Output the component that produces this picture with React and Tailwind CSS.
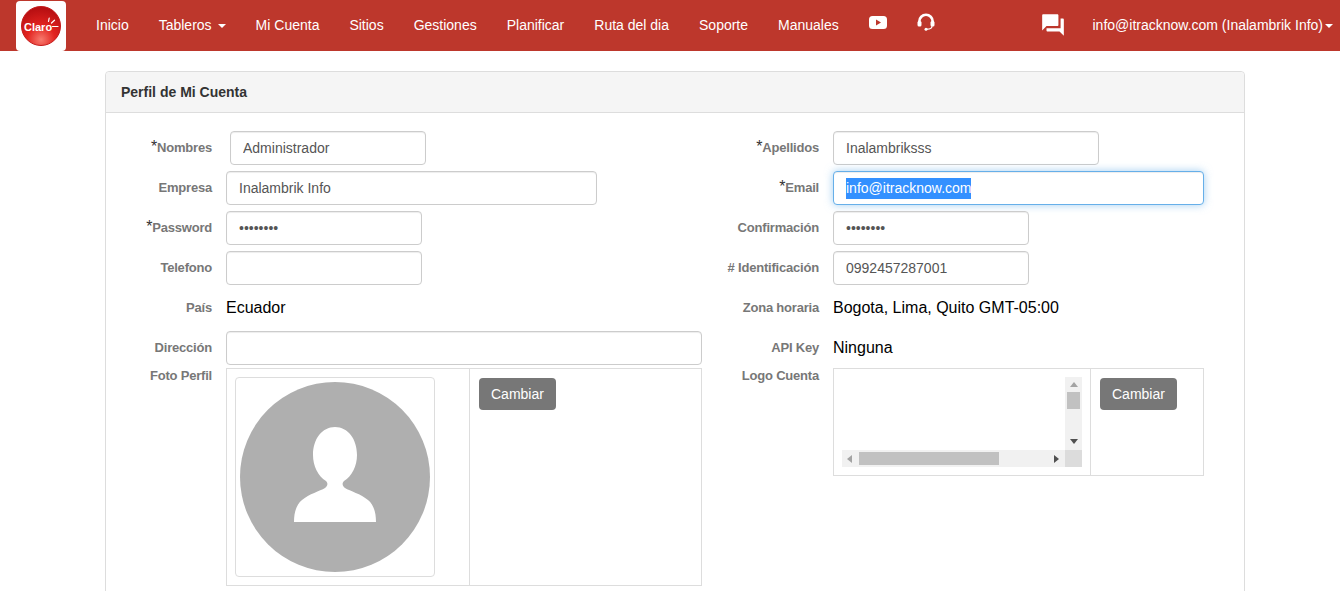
import React from "react";
import { MdQuestionAnswer } from "react-icons/md";

function Label({ children, required, top }) {
	return (
		<label
			className={`w-[106px] mr-[14px] shrink-0 text-right text-[13px] tracking-[-0.2px] font-bold text-[#777] ${top ? "self-start leading-[16px]" : ""}`}>
			{required && <span className="font-normal text-[#333] text-[16px] leading-[0]">*</span>}
			{children}
		</label>
	);
}

function Input({ value, type = "text", width, className = "" }) {
	return (
		<input
			readOnly
			type={type}
			value={value}
			className={`h-[34px] px-3 text-[14px] text-[#555] bg-white border border-[#ccc] rounded outline-none shadow-[inset_0_1px_1px_rgba(0,0,0,0.075)] ${width} ${className}`}
		/>
	);
}

function Row({ label, required, children }) {
	return (
		<div className="flex items-center h-[34px] mb-[6px]">
			<Label required={required}>{label}</Label>
			{children}
		</div>
	);
}

function Arrow({ dir, className }) {
	const points = {
		up: "0,6 4,1 8,6",
		down: "0,1 8,1 4,6",
		left: "6,0 6,8 1,4",
		right: "1,0 1,8 6,4",
	};
	return (
		<svg viewBox="0 0 8 8" className={`w-2 h-2 ${className}`} fill="currentColor">
			<polygon points={points[dir]} />
		</svg>
	);
}

function Logo() {
	return (
		<div className="w-[50px] h-[50px] bg-white rounded flex items-center justify-center">
			<svg viewBox="0 0 40 40" className="w-[40px] h-[40px]">
				<defs>
					<radialGradient id="claroBall" cx="50%" cy="85%" r="80%">
						<stop offset="0%" stopColor="#f77a6e" />
						<stop offset="45%" stopColor="#e2231f" />
						<stop offset="100%" stopColor="#b70f12" />
					</radialGradient>
				</defs>
				<circle cx="20" cy="20" r="19.5" fill="url(#claroBall)" stroke="#c41a1a" strokeWidth="1" />
				<text x="3" y="25" fontSize="11" fontWeight="700" fill="#fff" fontFamily="Liberation Sans, sans-serif">
					Claro
				</text>
				<path d="M27.5 15.5l.7-3.5M30.5 17l3-2.8M31.5 20.5h5.5" stroke="#fff" strokeWidth="1.2" strokeLinecap="round" fill="none" />
			</svg>
		</div>
	);
}

function Avatar() {
	return (
		<svg viewBox="0 0 190 190" className="w-[190px] h-[190px]">
			<circle cx="95" cy="95" r="95" fill="#afafaf" />
			<path
				d="M95 45c-13 0-22 12-22 28 0 11 5 21 13 26 2 2 2 5-1 7-5 3-16 6-23 12-6 5-8 13-8 22h82c0-9-2-17-8-22-7-6-18-9-23-12-3-2-3-5-1-7 8-5 13-15 13-26 0-16-9-28-22-28z"
				fill="#fff"
			/>
		</svg>
	);
}

const navItems = ["Inicio", "Tableros", "Mi Cuenta", "Sitios", "Gestiones", "Planificar", "Ruta del dia", "Soporte", "Manuales"];

export default function App() {
	return (
		<div className="h-[591px] overflow-hidden bg-white font-['Liberation_Sans',sans-serif] text-[14px]">
			{/* Navbar */}
			<nav className="h-[51px] bg-[#bd372c] text-white flex items-center pl-4 text-[14px]">
				<Logo />
				<ul className="flex items-center ml-[15px]">
					{navItems.map((item) => (
						<li key={item} className="px-[15px] flex items-center">
							{item}
							{item === "Tableros" && (
								<span className="ml-[6px] mt-[1px] border-x-4 border-x-transparent border-t-4 border-t-white" />
							)}
						</li>
					))}
					<li className="px-[15px] mb-[7px]">
						<svg viewBox="0 0 18 13" className="w-[18px] h-[13px]">
							<path
								fillRule="evenodd"
								fill="#fff"
								d="M3.5 0h11A3.5 3.5 0 0118 3.5v6a3.5 3.5 0 01-3.5 3.5h-11A3.5 3.5 0 010 9.500v-6A3.500 3.500 0 013.500 0zM7 3.500v6l5-3z"
							/>
						</svg>
					</li>
					<li className="px-[15px] mb-[7px]">
						<svg viewBox="0 0 18 18" className="w-[18px] h-[18px]" fill="none">
							<path d="M2.3 11V8.500a6.700 6.700 0 0113.400 0V11" stroke="#fff" strokeWidth="2.600" />
							<rect x="0.500" y="8" width="4" height="5.500" rx="1.500" fill="#fff" />
							<rect x="13.500" y="8" width="4" height="5.500" rx="1.500" fill="#fff" />
							<path d="M15 13c0 2.200-2 3.200-5 3.200" stroke="#fff" strokeWidth="1.200" />
							<circle cx="9" cy="16.200" r="1.500" fill="#fff" />
						</svg>
					</li>
				</ul>
				<MdQuestionAnswer className="ml-auto mb-[2px] w-[26px] h-[26px] text-white" />
				<div className="flex items-center ml-[26px] mr-[7px]">
					info@itracknow.com (Inalambrik Info)
					<span className="ml-[2px] mt-[1px] border-x-4 border-x-transparent border-t-4 border-t-white" />
				</div>
			</nav>

			<div className="ml-[105px] mr-[95px] mt-5 border border-[#ddd] rounded h-[600px]">
				<div className="h-[41px] bg-[#f5f5f5] border-b border-[#ddd] flex items-center pl-[15px] pt-[1px] text-[14px] font-bold text-[#333] rounded-t">
					Perfil de Mi Cuenta
				</div>

				<div className="flex pt-[18px]">
					{/* Left column */}
					<div className="w-[596px] mr-[11px]">
						<Row label="Nombres" required>
							<Input value="Administrador" width="w-[196px] ml-1" />
						</Row>
						<Row label="Empresa">
							<Input value="Inalambrik Info" width="w-[371px]" />
						</Row>
						<Row label="Password" required>
							<Input value="12345678" type="password" width="w-[196px]" />
						</Row>
						<Row label="Telefono">
							<Input value="" width="w-[196px]" />
						</Row>
						<Row label="País">
							<span className="text-[16px] text-black">Ecuador</span>
						</Row>
						<div className="flex items-center h-[34px] mb-[3px]">
							<Label>Dirección</Label>
							<Input value="" width="w-[476px]" />
						</div>
						<div className="flex">
							<Label top>Foto Perfil</Label>
							<div className="w-[476px] h-[218px] border border-[#ddd] flex">
								<div className="w-[243px] border-r border-[#ddd] p-2">
									<div className="w-[200px] h-[200px] border border-[#ddd] rounded p-1">
										<Avatar />
									</div>
								</div>
								<div className="p-[9px]">
									<button className="h-[32px] px-3 bg-[#777] text-white rounded text-[14px]">Cambiar</button>
								</div>
							</div>
						</div>
					</div>

					{/* Right column */}
					<div className="w-[491px]">
						<Row label="Apellidos" required>
							<Input value="Inalambriksss" width="w-[266px]" />
						</Row>
						<div className="flex items-center h-[34px] mb-[6px]">
							<Label required>Email</Label>
							<div className="w-[371px] h-[34px] px-3 flex items-center text-[14px] text-white bg-white border border-[#66afe9] rounded shadow-[inset_0_1px_1px_rgba(0,0,0,0.075),0_0_8px_rgba(102,175,233,0.6)]">
								<span className="bg-[#3390ff]">info@itracknow.com</span>
							</div>
						</div>
						<Row label="Confirmación">
							<Input value="12345678" type="password" width="w-[196px]" />
						</Row>
						<Row label="# Identificación">
							<Input value="0992457287001" width="w-[196px]" />
						</Row>
						<Row label="Zona horaria">
							<span className="text-[16px] text-black">Bogota, Lima, Quito GMT-05:00</span>
						</Row>
						<div className="flex items-center h-[34px] mb-[3px]">
							<Label>API Key</Label>
							<span className="text-[16px] text-black">Ninguna</span>
						</div>
						<div className="flex">
							<Label top>Logo Cuenta</Label>
							<div className="w-[371px] h-[108px] border border-[#ddd] flex">
								<div className="w-[257px] border-r border-[#ddd] p-2">
									<div className="w-[240px] h-[90px] flex flex-col">
										<div className="flex flex-1">
											<div className="flex-1" />
											<div className="w-[17px] bg-[#f1f1f1] flex flex-col items-center">
												<Arrow dir="up" className="mt-1 text-[#a3a3a3]" />
												<div className="w-[13px] h-[17px] mt-[3px] bg-[#c1c1c1]" />
												<Arrow dir="down" className="mt-auto mb-1 text-[#505050]" />
											</div>
										</div>
										<div className="h-[17px] flex">
											<div className="flex-1 bg-[#f1f1f1] flex items-center">
												<Arrow dir="left" className="ml-1 text-[#a3a3a3]" />
												<div className="w-[140px] h-[13px] ml-[5px] bg-[#c1c1c1]" />
												<Arrow dir="right" className="ml-auto mr-1 text-[#505050]" />
											</div>
											<div className="w-[17px] bg-[#dcdcdc]" />
										</div>
									</div>
								</div>
								<div className="p-[9px]">
									<button className="h-[32px] px-3 bg-[#777] text-white rounded text-[14px]">Cambiar</button>
								</div>
							</div>
						</div>
					</div>
				</div>
			</div>
		</div>
	);
}
